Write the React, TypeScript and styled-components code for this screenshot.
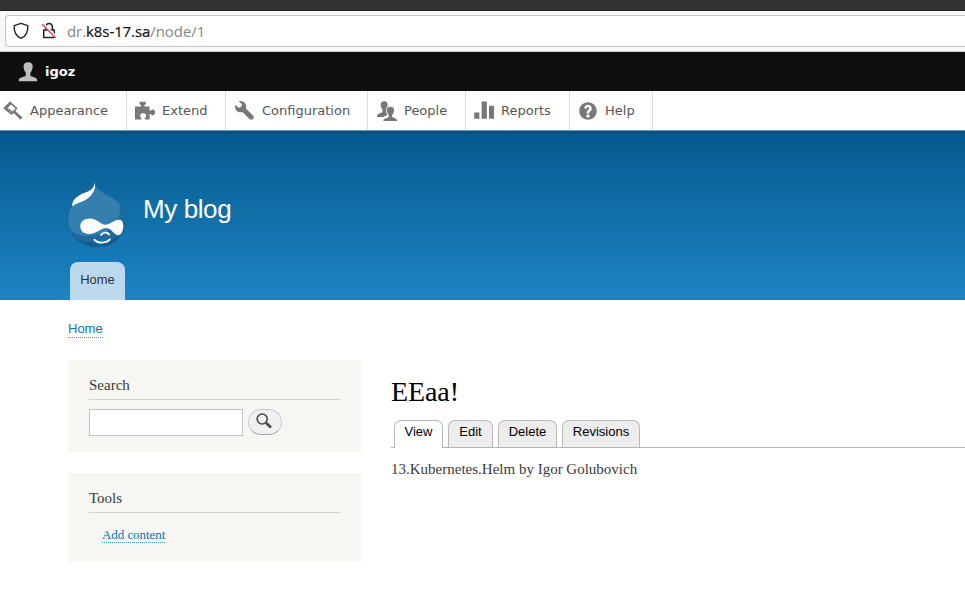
import React from "react";
import styled, { createGlobalStyle } from "styled-components";

const Global = createGlobalStyle`
  * { box-sizing: border-box; }
  body { margin: 0; background: #fff; overflow: hidden; }
  a { color: inherit; text-decoration: none; }
`;

const sans = `"Liberation Sans", Arial, sans-serif`;
const serif = `"Liberation Serif", Georgia, serif`;
const toolbarFont = `"DejaVu Sans", sans-serif`;

const Page = styled.div`
  width: 100%;
  height: 608px;
  overflow: hidden;
  display: flex;
  flex-direction: column;
`;
const TitleBar = styled.div`
  flex: none;
  height: 11px;
  background: #333032;
  border-bottom: 1px solid #211d20;
`;
const BrowserBar = styled.div`
  flex: none;
  height: 41px;
  padding: 4px 0 0 5px;
  background: #f8f8f8;
  border-bottom: 1px solid #cbcbcb;
`;
const AddressField = styled.div`
  height: 32px;
  display: flex;
  align-items: center;
  padding-left: 6px;
  background: #fff;
  border: 1px solid #c3c3c3;
  border-right: 0;
  border-radius: 4px 0 0 4px;
  svg { display: block; flex: none; }
`;
const LockSlot = styled.span`
  margin-left: 11px;
`;
const Url = styled.span`
  margin-left: 10px;
  font: 15px/20px "Open Sans", "Noto Sans", sans-serif;
  letter-spacing: -0.08px;
  color: #858585;
  white-space: nowrap;
  strong { font-weight: 400; color: #111; -webkit-text-stroke: 0.2px #111; }
`;
const UserBar = styled.div`
  flex: none;
  height: 39px;
  display: flex;
  align-items: center;
  padding-left: 18px;
  background: #0f0f0f;
  color: #fff;
  font: bold 13px/20px ${toolbarFont};
  svg { display: block; margin-right: 7px; }
`;
const Tray = styled.nav`
  flex: none;
  height: 39px;
  display: flex;
  background: #fff;
`;
const TrayItem = styled.a<{ $width: number; $inset: number }>`
  width: ${(p) => p.$width}px;
  height: 39px;
  display: flex;
  align-items: center;
  padding-left: ${(p) => p.$inset}px;
  border-right: 1px solid #ddd;
  color: #565656;
  font: 13px/20px ${toolbarFont};
  white-space: nowrap;
  svg { display: block; flex: none; margin-right: 7px; }
`;
const Header = styled.header`
  flex: none;
  height: 170px;
  padding-left: 68px;
  display: flex;
  flex-direction: column;
  justify-content: space-between;
  border-top: 1px solid #6f9ab5;
  background: linear-gradient(#0a4d78 0, rgba(10, 77, 120, 0) 4px) padding-box,
    linear-gradient(#055a8e 0%, #1d84c3 100%) padding-box;
`;
const Branding = styled.div`
  display: flex;
  padding-top: 51px;
  svg { display: block; }
`;
const SiteName = styled.h1`
  margin: 11px 0 0 16px;
  font: 400 26px/32px ${sans};
  letter-spacing: -0.4px;
  color: #fffeff;
`;
const MenuTab = styled.a`
  width: 55px;
  height: 38px;
  margin-left: 2px;
  border-radius: 8px 8px 0 0;
  background: #bbd9ec;
  color: #333;
  font: 13px/35px ${sans};
  text-align: center;
`;
const Main = styled.main`
  padding: 20px 0 0 68px;
`;
const Breadcrumb = styled.nav`
  height: 40px;
  font: 13px/17px ${sans};
`;
const DottedLink = styled.a`
  display: inline-block;
  border-bottom: 1px dotted #4b9bc8;
  && { color: #1274ae; }
`;
const Columns = styled.div`
  display: flex;
`;
const Sidebar = styled.aside`
  flex: none;
  width: 293px;
  display: flex;
  flex-direction: column;
  gap: 21px;
`;
const Block = styled.section<{ $height: number }>`
  height: ${(p) => p.$height}px;
  padding: 15px 21px 0;
  background: #f6f6f2;
`;
const BlockTitle = styled.h2`
  margin: 0;
  height: 25px;
  border-bottom: 1px solid #d3d3d0;
  font: 400 15px/20px ${serif};
  color: #3b3b3b;
`;
const SearchForm = styled.form`
  display: flex;
  padding-top: 9px;
`;
const SearchInput = styled.input`
  width: 154px;
  height: 27px;
  padding: 2px;
  border: 1px solid #c2c2c0;
  border-radius: 0;
  background: #fff;
  outline: none;
`;
const SearchButton = styled.button`
  width: 34px;
  height: 26px;
  margin-left: 5px;
  padding: 0 2px 2px 0;
  display: flex;
  align-items: center;
  justify-content: center;
  border: 1px solid #ccc;
  border-bottom-color: #a8a8a8;
  border-radius: 13px;
  background: #f0f0f0;
`;
const ToolLinks = styled.div`
  padding: 14px 0 0 13px;
  font: 13px/15px ${serif};
  letter-spacing: -0.06px;
`;
const Content = styled.article`
  flex: 1;
  padding: 14px 0 0 30px;
`;
const PageTitle = styled.h1`
  margin: 0;
  height: 46px;
  font: 400 28px/36px ${serif};
  letter-spacing: -0.1px;
  color: #000;
`;
const Tabs = styled.div`
  display: flex;
  gap: 5px;
  height: 28px;
  padding-left: 3px;
  border-bottom: 1px solid #b4b4b4;
`;
const Tab = styled.a<{ $width: number; $active?: boolean }>`
  width: ${(p) => p.$width}px;
  height: ${(p) => (p.$active ? 28 : 27)}px;
  border: 1px solid #b8b8b8;
  border-bottom: 0;
  border-radius: 7px 7px 0 0;
  background: ${(p) => (p.$active ? "#fff" : "#ededed")};
  && { color: #000; }
  font: 13px/22px ${sans};
  text-align: center;
`;
const BodyText = styled.p`
  margin: 11px 0 0;
  font: 15px/21px ${serif};
  color: #3b3b3b;
`;

const Icon = ({ children }: { children: React.ReactNode }) => (
  <svg width="20" height="20" viewBox="0 0 20 20" fill="#787878">
    {children}
  </svg>
);

const trayItems = [
  {
    label: "Appearance", width: 127, inset: 3,
    icon: (
      <Icon>
        <path
          d="M7 .3 14.400 7l-.6 1.200-1.300 1.200.4 1.200 6.600 6-2 2.200-6.300-6.200-1.400.1-1.300 1.200L.2 7.200zM8 3.600 4.300 7.400l4.300 4 3.800-4z"
          fillRule="evenodd"
        />
        <path d="m4.300 7.400 4.300 4 1.300-1.300-2.200-.6-.9-1.500-1.400-.2-.4-1.100z" />
      </Icon>
    ),
  },
  {
    label: "Extend", width: 99, inset: 8,
    icon: (
      <Icon>
        <path d="M0 5.400h6V4.200L4.600 3V.8h6.200V3L9.400 4.200v1.200h5.200v4.400h1.200l1-1.300h1.800L20 10v2.800l-1.400 1.500h-1.800l-1-1.300h-1.200v5.500H9.800v-1.400l1.300-1.400v-1.900l-1.600-1.600H6.700l-1.500 1.600v1.900l1.200 1.400v1.400H0z" />
      </Icon>
    ),
  },
  {
    label: "Configuration", width: 142, inset: 9,
    icon: (
      <svg width="20" height="20" viewBox="0 0 16 16" fill="#787878">
        <path d="M14.416 11.586l-5.666-5.665c.15-.449.252-.921.252-1.421 0-2.485-2.016-4.500-4.502-4.500-.505 0-.981.102-1.434.255l2.431 2.431-.588 2.196-2.196.588-2.445-2.445c-.162.464-.268.956-.268 1.475 0 2.486 2.014 4.500 4.500 4.500.5 0 .972-.102 1.421-.251l5.667 5.665c.781.781 2.047.781 2.828 0s.781-2.047 0-2.828z" />
      </svg>
    ),
  },
  {
    label: "People", width: 98, inset: 9,
    icon: (
      <Icon>
        <path d="M7.200.3C4.700.3 3.600 1.800 3.700 4.100c.1 1.700.7 3.300 1.700 4.300v2.300C4.700 12.300 0 12.300 0 15v1h6.600c1-1.200 2.600-1.500 3.900-2.100-.9-1.200-1.400-2.800-1.300-4.400 0-1.600.4-2.900 1.300-3.700.5-3.300-.5-5.500-3.300-5.500z" />
        <path d="M13.500 5.800c-2.600 0-3.700 1.500-3.600 3.800.1 1.700.8 3.200 1.800 4.200v2.100c-.7 1.300-5.300 1.300-5.300 3.500v.6H20v-.6c0-2.300-4-2.300-4.800-3.600v-2c1.100-1 1.800-2.500 1.900-4.200.1-2.300-1-3.800-3.600-3.800z" />
      </Icon>
    ),
  },
  {
    label: "Reports", width: 104, inset: 8,
    icon: (
      <Icon>
        <rect x="0.200" y="11.600" width="5.200" height="6.200" rx=".4" />
        <rect x="7.600" y="0.600" width="5.300" height="17.200" rx=".4" />
        <rect x="15" y="4.800" width="5" height="13" rx=".4" />
      </Icon>
    ),
  },
  {
    label: "Help", width: 83, inset: 8,
    icon: (
      <svg width="20" height="20" viewBox="0 0 16 16" fill="#787878">
        <path d="M8.002 1c-3.868 0-7.002 3.134-7.002 7s3.134 7 7.002 7c3.865 0 7-3.134 7-7s-3.135-7-7-7zm3 5c0 .551-.16 1.085-.477 1.586l-.158.22c-.07.093-.189.241-.361.393-.168.148-.35.299-.545.447l-.203.189-.141.129-.096.17-.021.235v.63h-2.001v-.704c.026-.396.078-.73.204-.999.125-.269.271-.498.439-.688l.225-.21-.01-.015.176-.14.137-.128c.186-.139.357-.277.516-.417l.148-.18c.098-.152.168-.323.168-.518 0-.552-.447-1-1.002-1-.548 0-1 .448-1 1h-2.002c0-1.657 1.343-3 3.002-3 1.656 0 3 1.343 3 3zm-1.750 6.619c0 .344-.281.625-.625.625h-1.250c-.345 0-.626-.281-.626-.625v-1.238c0-.344.281-.625.626-.625h1.250c.344 0 .625.281.625.625v1.238z" />
      </svg>
    ),
  },
];

const UserIcon = () => (
  <svg width="20" height="20" viewBox="0 0 20 20" fill="#bebebe">
    <path d="M10.200.3C6.900.3 5.500 2 5.600 4.800c.1 2.400.9 4.500 2.200 6v2.700c-.8 1.500-7 1.600-7 4.700v1h18.400v-1c0-3.100-6-3.200-6.800-4.700v-2.700c1.300-1.500 2.200-3.600 2.300-6C14.800 2 13.400.3 10.200.3z" />
  </svg>
);

const Shield = () => (
  <svg width="18" height="18" viewBox="0 0 18 18" fill="none" stroke="#222" strokeWidth="1.400" strokeLinejoin="round">
    <path d="M9 1.400 15.800 3.700c.3 4.700-.9 9.900-6.800 12.700C3.100 13.600 1.900 8.400 2.200 3.700z" />
  </svg>
);

const BrokenLock = () => (
  <svg width="16" height="18" viewBox="0 0 16 18" fill="none">
    <path d="M5 8V4.800a3.200 3.200 0 0 1 6.400 0V8M2.700 8h10.600v7.600H2.700z" stroke="#222" strokeWidth="1.500" strokeLinejoin="round" />
    <path d="m2 1.800 13.300 13.600" stroke="#fff" strokeWidth="2.600" />
    <path d="m1.200 2.200 13.500 13.700" stroke="#e12a5b" strokeWidth="1.300" />
  </svg>
);

const dropPath =
  "M27 1c.4 4.600 3.700 6.900 8.200 9.500C45 15.500 58 22.500 58 37 58 54 45 65 29 65S0 53.500 0 37.500C0 28 3.500 22 8.500 17.500 15 11 25 9 27 1z";

const Druplicon = () => (
  <svg width="59" height="66" viewBox="0 0 59 66">
    <defs>
      <clipPath id="drop"><path d={dropPath} /></clipPath>
    </defs>
    <g clipPath="url(#drop)">
      <path d="M0 0h59v66H0z" fill="#1f699e" />
      <path d="M0 0h36c11 10 16 18 16 27 0 18-17 26-33 27C10 54 4 50 0 46z" fill="#357fae" />
      <path d="M5 54c10 8 33 10 48-3l-5 15H10z" fill="#145e95" />
    </g>
    <path d={dropPath} fill="none" stroke="#195f91" strokeOpacity=".65" />
    <path d="M26.900.8c.7 4-.1 7-1.900 9.700-2.300 3.500-4.500 5.800-9 8.300-4 2-8.500 3-11.500 5.500-.8-2.500.4-5.600 3.200-8.300 3.500-3.200 8-5.300 12.300-6.600 3.600-1.300 6.300-4.300 6.900-8.600z" fill="#fff" />
    <path d="M22 36.500c7 0 10.500 6 15.500 6.200 4.500-.2 8.500-5 13.500-5 3 0 4.300 2.600 4.300 6.300 0 5-2.200 9.200-5 9.200-4.300 0-7-7.200-12.300-7.200-5 0-9.200 5.900-17 5.900-5.500 0-8.700-3.300-8.700-7.700 0-4.600 4.200-7.700 9.700-7.700z" fill="#fff" />
    <path d="M33 53c1.400-2.800 6.500-3.600 8.200-.4M26.500 57.800c3.500 4.200 12 3.300 15.500-.4" fill="none" stroke="#fff" strokeWidth="1.800" strokeLinecap="round" />
  </svg>
);

const Magnifier = () => (
  <svg width="18" height="18" viewBox="0 0 18 18" fill="none" stroke="#484848">
    <circle cx="7.200" cy="7" r="5" strokeWidth="1.600" />
    <path d="m10.700 10.500 1.500 1.500" strokeWidth="1.600" />
    <path d="m12 11.700 3.200 3.100" strokeWidth="2.700" strokeLinecap="round" />
  </svg>
);

export default function App() {
  return (
    <Page>
      <Global />
      <TitleBar />
      <BrowserBar>
        <AddressField>
          <Shield />
          <LockSlot><BrokenLock /></LockSlot>
          <Url>dr.<strong>k8s-17.sa</strong>/node/1</Url>
        </AddressField>
      </BrowserBar>
      <UserBar>
        <UserIcon />
        igoz
      </UserBar>
      <Tray>
        {trayItems.map((item) => (
          <TrayItem key={item.label} href="#" $width={item.width} $inset={item.inset}>
            {item.icon}
            {item.label}
          </TrayItem>
        ))}
      </Tray>
      <Header>
        <Branding>
          <Druplicon />
          <SiteName>My blog</SiteName>
        </Branding>
        <MenuTab href="#">Home</MenuTab>
      </Header>
      <Main>
        <Breadcrumb><DottedLink href="#">Home</DottedLink></Breadcrumb>
        <Columns>
          <Sidebar>
            <Block $height={92}>
              <BlockTitle>Search</BlockTitle>
              <SearchForm>
                <SearchInput aria-label="Search" />
                <SearchButton type="button" aria-label="Search"><Magnifier /></SearchButton>
              </SearchForm>
            </Block>
            <Block $height={89}>
              <BlockTitle>Tools</BlockTitle>
              <ToolLinks><DottedLink href="#">Add content</DottedLink></ToolLinks>
            </Block>
          </Sidebar>
          <Content>
            <PageTitle>EEaa!</PageTitle>
            <Tabs>
              <Tab href="#" $width={49} $active>View</Tab>
              <Tab href="#" $width={45}>Edit</Tab>
              <Tab href="#" $width={59}>Delete</Tab>
              <Tab href="#" $width={78}>Revisions</Tab>
            </Tabs>
            <BodyText>13.Kubernetes.Helm by Igor Golubovich</BodyText>
          </Content>
        </Columns>
      </Main>
    </Page>
  );
}
